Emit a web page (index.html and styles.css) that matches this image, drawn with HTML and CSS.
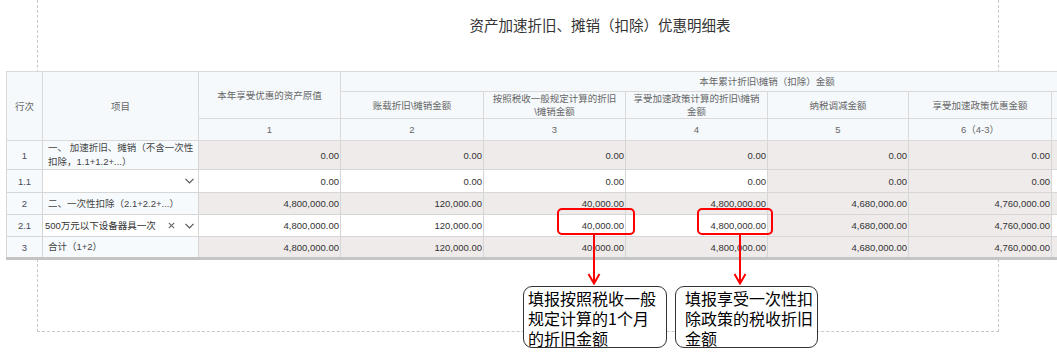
FILE: index.html
```html
<!DOCTYPE html>
<html lang="zh-CN">
<head>
<meta charset="utf-8">
<title>资产加速折旧、摊销（扣除）优惠明细表</title>
<link rel="stylesheet" href="styles.css">
</head>
<body>
<div class="sheet">
  <div class="report">
    <h1 class="title">资产加速折旧、摊销（扣除）优惠明细表</h1>
    <table class="grid">
      <colgroup>
        <col class="w-no"><col class="w-item"><col class="w-n142"><col class="w-n143"><col class="w-n142"><col class="w-n142"><col class="w-n141"><col class="w-n143"><col class="w-n142">
      </colgroup>
      <thead>
        <tr class="hr1">
          <th rowspan="3">行次</th>
          <th rowspan="3">项目</th>
          <th rowspan="2">本年享受优惠的资产原值</th>
          <th colspan="6">本年累计折旧\摊销（扣除）金额</th>
        </tr>
        <tr class="hr2">
          <th>账载折旧\摊销金额</th>
          <th>按照税收一般规定计算的折旧<br>\摊销金额</th>
          <th>享受加速政策计算的折旧\摊销<br>金额</th>
          <th>纳税调减金额</th>
          <th>享受加速政策优惠金额</th>
          <th></th>
        </tr>
        <tr class="hr3">
          <th>1</th><th>2</th><th>3</th><th>4</th><th>5</th><th>6（4-3）</th><th></th>
        </tr>
      </thead>
      <tbody>
        <tr class="dr1">
          <td class="no">1</td>
          <td class="item">一、 加速折旧、摊销（不含一次性<br>扣除，1.1+1.2+...）</td>
          <td class="num">0.00</td><td class="num">0.00</td><td class="num">0.00</td><td class="num">0.00</td><td class="num">0.00</td><td class="num">0.00</td><td class="num"></td>
        </tr>
        <tr class="dr2">
          <td class="no">1.1</td>
          <td class="item sel-cell"><div class="sel"><span class="sel-text"></span><svg class="chev" width="9" height="6" viewBox="0 0 9 6"><polyline points="0.5,0.8 4.5,4.8 8.5,0.8" fill="none" stroke="#555" stroke-width="1.2"/></svg></div></td>
          <td class="num edit">0.00</td><td class="num edit">0.00</td><td class="num edit">0.00</td><td class="num edit">0.00</td><td class="num">0.00</td><td class="num">0.00</td><td class="num edit"></td>
        </tr>
        <tr class="dr3">
          <td class="no">2</td>
          <td class="item">二、一次性扣除（2.1+2.2+...）</td>
          <td class="num">4,800,000.00</td><td class="num">120,000.00</td><td class="num">40,000.00</td><td class="num">4,800,000.00</td><td class="num">4,680,000.00</td><td class="num">4,760,000.00</td><td class="num"></td>
        </tr>
        <tr class="dr4">
          <td class="no">2.1</td>
          <td class="item sel-cell"><div class="sel"><span class="sel-text">500万元以下设备器具一次</span><svg class="clear" width="7" height="7" viewBox="0 0 7 7"><path d="M0.8 0.8L6.2 6.2M6.2 0.8L0.8 6.2" stroke="#666" stroke-width="1.1"/></svg><svg class="chev" width="9" height="6" viewBox="0 0 9 6"><polyline points="0.5,0.8 4.5,4.8 8.5,0.8" fill="none" stroke="#555" stroke-width="1.2"/></svg></div></td>
          <td class="num edit">4,800,000.00</td><td class="num edit">120,000.00</td><td class="num edit">40,000.00</td><td class="num edit">4,800,000.00</td><td class="num">4,680,000.00</td><td class="num">4,760,000.00</td><td class="num edit"></td>
        </tr>
        <tr class="dr5">
          <td class="no">3</td>
          <td class="item">合计（1+2）</td>
          <td class="num">4,800,000.00</td><td class="num">120,000.00</td><td class="num">40,000.00</td><td class="num">4,800,000.00</td><td class="num">4,680,000.00</td><td class="num">4,760,000.00</td><td class="num"></td>
        </tr>
      </tbody>
    </table>

    <div class="mark mark-1"></div>
    <div class="mark mark-2"></div>
    <svg class="arrow arrow-1" width="14" height="50" viewBox="0 0 14 50"><line x1="7" y1="0" x2="7" y2="48" stroke="#f00" stroke-width="2"/><polyline points="1.5,39 7,48.5 12.5,39" fill="none" stroke="#f00" stroke-width="2"/></svg>
    <svg class="arrow arrow-2" width="14" height="50" viewBox="0 0 14 50"><line x1="7" y1="0" x2="7" y2="48" stroke="#f00" stroke-width="2"/><polyline points="1.5,39 7,48.5 12.5,39" fill="none" stroke="#f00" stroke-width="2"/></svg>
    <div class="note note-1">填报按照税收一般<br>规定计算的1个月<br>的折旧金额</div>
    <div class="note note-2">填报享受一次性扣<br>除政策的税收折旧<br>金额</div>
  </div>
</div>
</body>
</html>
```

FILE: styles.css
```css
html, body {
  margin: 0;
  padding: 0;
  background: #fff;
  overflow: hidden;
}
body {
  width: 1057px;
  height: 352px;
  font-family: "Liberation Sans", "Noto Sans CJK SC", sans-serif;
}
.sheet {
  margin-left: 37px;
  width: 962px;
  height: 332px;
  box-sizing: border-box;
  border: 1px dashed #c8c8c8;
  border-top: none;
}
.report {
  position: relative;
  margin-left: -32px;
  width: 1188px;
}
.title {
  margin: 0;
  height: 71px;
  box-sizing: border-box;
  padding-top: 15px;
  font-family: "Noto Sans CJK SC", sans-serif;
  font-size: 14.5px;
  line-height: 20px;
  font-weight: normal;
  text-align: center;
  color: #333;
}
.grid {
  border-collapse: collapse;
  table-layout: fixed;
  width: 1188px;
  font-size: 9.5px;
  color: #333;
}
.w-no { width: 36px; }
.w-item { width: 156px; }
.w-n141 { width: 141px; }
.w-n142 { width: 142px; }
.w-n143 { width: 143px; }
.grid th, .grid td {
  border: 1px solid #dadada;
  padding: 0;
}
.grid th {
  background: #f5f9fc;
  color: #666;
  font-weight: normal;
  text-align: center;
  line-height: 13px;
}
.hr1 { height: 20px; }
.hr2 { height: 26px; }
.hr3 { height: 22px; }
.dr1 { height: 25px; }
.dr2 { height: 23px; }
.dr3, .dr4, .dr5 { height: 22px; }
.grid td { border-color: #d6d6d6; }
.dr5 td { border-bottom: 3px solid #c4c4c4; }
.no {
  text-align: center;
  background: #f6fafd;
  color: #4a4a5a;
}
.item {
  text-align: left;
  background: #f6fafd;
  padding-left: 5px !important;
  line-height: 14px;
  color: #444;
}
.sel-cell {
  background: #fff;
  padding-left: 2px !important;
}
.sel {
  display: flex;
  align-items: center;
}
.sel-text {
  flex: 1;
  white-space: nowrap;
  color: #333;
}
.clear {
  margin-right: 10px;
}
.chev {
  margin-right: 4px;
}
.num {
  text-align: right;
  padding-right: 1px !important;
  background: #efebeb;
  color: #333;
  white-space: nowrap;
}
.num.edit {
  background: #fff;
}
.mark {
  position: absolute;
  top: 208px;
  height: 27px;
  box-sizing: border-box;
  border: 2px solid #f00;
  border-radius: 5px;
}
.mark-1 { left: 551px; width: 78px; }
.mark-2 { left: 691px; width: 76px; }
.arrow {
  position: absolute;
  top: 235px;
}
.arrow-1 { left: 581px; }
.arrow-2 { left: 727px; }
.note {
  position: absolute;
  top: 286px;
  height: 62px;
  box-sizing: border-box;
  border: 1.5px solid #333;
  border-radius: 9px;
  background: #fff;
  padding-top: 1px;
  font-family: "Noto Sans CJK SC", sans-serif;
  font-size: 16px;
  line-height: 20px;
  color: #000;
  white-space: nowrap;
}
.note-1 { left: 517px; width: 144px; padding-left: 4px; }
.note-2 { left: 669px; width: 143px; padding-left: 9px; }
```
